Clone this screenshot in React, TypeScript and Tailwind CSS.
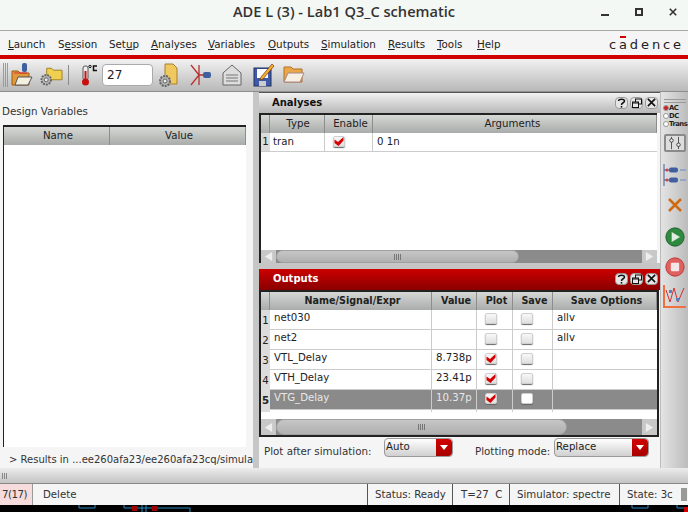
import React from 'react';

const FONT = 'font-["DejaVu_Sans",sans-serif]';
const HEADER_BG = 'bg-gradient-to-b from-[#d6d8d6] to-[#a9acaa]';

// menu label split around its underlined mnemonic
const MENUS: [string, string, string, string][] = [
  ['', 'L', 'aunch', 'w-[50px]'],
  ['S', 'e', 'ssion', 'w-[51px]'],
  ['Set', 'u', 'p', 'w-[42px]'],
  ['', 'A', 'nalyses', 'w-[57px]'],
  ['', 'V', 'ariables', 'w-[60px]'],
  ['', 'O', 'utputs', 'w-[53px]'],
  ['', 'S', 'imulation', 'w-[67px]'],
  ['', 'R', 'esults', 'w-[49px]'],
  ['', 'T', 'ools', 'w-[40px]'],
  ['', 'H', 'elp', 'w-[30px]'],
];

const OUTPUT_COLS = 'grid-cols-[9px_162px_45px_36px_40px_1fr]';
const ANALYSIS_COLS = 'grid-cols-[9px_55px_48px_1fr]';

const OUTPUT_ROWS = [
  { name: 'net030', value: '', plot: false, opts: 'allv' },
  { name: 'net2', value: '', plot: false, opts: 'allv' },
  { name: 'VTL_Delay', value: '8.738p', plot: true, opts: '' },
  { name: 'VTH_Delay', value: '23.41p', plot: true, opts: '' },
  { name: 'VTG_Delay', value: '10.37p', plot: true, opts: '', selected: true },
];

const Check = ({ on, bright }: { on?: boolean; bright?: boolean }) => (
  <span className={`relative block w-[12px] h-[11px] rounded-[2px] border border-[#cfcfcf] shadow-[0_1px_1px_#666] ${bright ? 'bg-white' : 'bg-gradient-to-b from-[#f8f8f8] to-[#e0e0e0]'}`}>
    {on && (
      <svg viewBox="0 0 12 11" className="absolute -left-[1px] -top-[1px] w-[12px] h-[11px]">
        <path d="M1.500 3.500 L5 6 L10.500 1 L10.500 4.500 L5.500 10 L1.500 7 Z" fill="#d80000" />
      </svg>
    )}
  </span>
);

const DockButtons = () => (
  <div className="flex items-center gap-[2px]">
    <span className="flex items-center justify-center w-[13px] h-[12px] rounded-[4px] bg-[#e6e6e6] border border-[#9a9a9a]">
      <svg viewBox="0 0 9 10" className="w-[9px] h-[10px]">
        <path d="M1.500 3 C1.500 0.500 7.500 0.500 7.500 3 C7.500 5 4.500 4.500 4.500 7" fill="none" stroke="#111" strokeWidth="1.500" />
        <rect x="3.700" y="8" width="1.600" height="1.600" fill="#111" />
      </svg>
    </span>
    <span className="flex items-center justify-center w-[13px] h-[12px] rounded-[4px] bg-[#e6e6e6] border border-[#9a9a9a]">
      <svg viewBox="0 0 10 10" className="w-[10px] h-[10px]">
        <rect x="3.500" y="1" width="6" height="5" fill="none" stroke="#111" />
        <rect x="0.500" y="4" width="6" height="5.500" fill="#e6e6e6" stroke="#111" />
        <path d="M1 5H6" stroke="#111" />
      </svg>
    </span>
    <span className="flex items-center justify-center w-[13px] h-[12px] rounded-[4px] bg-[#e6e6e6] border border-[#9a9a9a]">
      <svg viewBox="0 0 10 10" className="w-[9px] h-[9px]">
        <path d="M1 1 L9 9 M9 1 L1 9" stroke="#111" strokeWidth="1.800" />
      </svg>
    </span>
  </div>
);

const ScrollBar = ({ thumb, h }: { thumb: string; h: string }) => (
  <div className={`flex items-stretch bg-[#8b8b8b] shrink-0 ${h}`}>
    <div className="w-[15px] bg-[#c8c8c8] flex items-center justify-center">
      <svg viewBox="0 0 10 12" className="w-[9px] h-[11px]"><path d="M9 1 L1 6 L9 11 Z" fill="#eeeeee" /></svg>
    </div>
    <div className={`${thumb} rounded-full bg-gradient-to-b from-[#c6c6c6] to-[#b0b0b0] border border-[#a0a0a0] flex items-center justify-center`}>
      <span className="w-[8px] h-[6px] bg-[repeating-linear-gradient(90deg,#777_0_1px,transparent_1px_2px)]" />
    </div>
    <div className="flex-1" />
    <div className="w-[15px] bg-[#c8c8c8] flex items-center justify-center">
      <svg viewBox="0 0 10 12" className="w-[9px] h-[11px]"><path d="M1 1 L9 6 L1 11 Z" fill="#eeeeee" /></svg>
    </div>
  </div>
);

const Combo = ({ label, w }: { label: string; w: string }) => (
  <div className={`relative shrink-0 ${w} h-[19px] rounded-[4px] border border-[#9a9a9a] bg-gradient-to-b from-white to-[#d0d0d0] text-[10.200px] leading-[15px] pl-[1px] text-[#222]`}>
    {label}
    <span className="absolute right-0 top-0 bottom-0 w-[16px] rounded-r-[4px] bg-gradient-to-b from-[#d20000] to-[#a80000] flex items-center justify-center">
      <svg viewBox="0 0 8 5" className="w-[8px] h-[5px]"><path d="M0 0 H8 L4 5 Z" fill="#fff" /></svg>
    </span>
  </div>
);

const HeaderCell = ({ children, bold, pad = 'pl-[3px]' }: { children?: React.ReactNode; bold?: boolean; pad?: string }) => (
  <div className={`${HEADER_BG} border-r border-[#8d8d8d] text-center leading-[18px] text-[#222] ${bold ? 'font-bold text-[9.600px] pl-[4px]' : `text-[10.200px] ${pad}`}`}>{children}</div>
);

const Gear = ({ cx, cy }: { cx: number; cy: number }) => (
  <g>
    <circle cx={cx} cy={cy} r="5" fill="#b4b4b4" stroke="#666" strokeWidth="2" strokeDasharray="2 1" />
    <circle cx={cx} cy={cy} r="2" fill="#eee" stroke="#666" />
  </g>
);

const ToolIcons = () => (
  <div className="flex items-center">
    {/* grip */}
    <span className="ml-[3px] w-[6px] h-[24px] bg-[repeating-linear-gradient(90deg,#9a9a9a_0_1px,transparent_1px_2px)]" />
    {/* open session */}
    <svg viewBox="0 0 22 26" className="ml-[2px] w-[22px] h-[26px]">
      <path d="M1 9h6l2 2h9v12H1z" fill="#e09a3c" stroke="#a05a10" />
      <path d="M4 23l3-8h14l-4 8z" fill="#f4f0e0" stroke="#555" />
      <rect x="11" y="1" width="5" height="9" rx="2" fill="#3f5f9f" />
      <path d="M3 11h13" stroke="#d33" />
    </svg>
    {/* gear + folder */}
    <svg viewBox="0 0 24 24" className="ml-[7px] w-[23px] h-[24px]">
      <path d="M7 5h5l2 2h9v10H7z" fill="#f0cf50" stroke="#a08020" />
      <Gear cx={6.500} cy={17} />
    </svg>
    <span className="ml-[5px] w-px h-[20px] bg-[#8a8a8a]" />
    {/* thermometer */}
    <svg viewBox="0 0 18 24" className="ml-[11px] w-[18px] h-[24px]">
      <rect x="3" y="3" width="5" height="14" rx="2" fill="#eee" stroke="#555" />
      <rect x="4.500" y="8" width="2" height="10" fill="#c81010" />
      <circle cx="5.500" cy="19" r="3.500" fill="#c81010" />
      <circle cx="10" cy="3.500" r="1.200" fill="none" stroke="#111" />
      <path d="M17 3H13.500V7.500H17" fill="none" stroke="#111" strokeWidth="1.500" />
    </svg>
    <div className="ml-[4px] w-[51px] h-[22px] rounded-[4px] bg-white border border-[#aaa] pl-[4px] text-[12px] leading-[20px] text-[#222]">27</div>
    {/* gear + doc */}
    <svg viewBox="0 0 20 26" className="ml-[6px] w-[20px] h-[26px]">
      <path d="M6 2h8l4 4v16H6z" fill="#efc860" stroke="#a88030" />
      <Gear cx={6} cy={19} />
    </svg>
    {/* probe */}
    <svg viewBox="0 0 22 24" className="ml-[11px] w-[22px] h-[24px]">
      <path d="M1 2 L9 12 L1 22 M9 2 V22 M9 12 H14" fill="none" stroke="#b83030" strokeWidth="1.300" />
      <rect x="13" y="9" width="8" height="6" rx="2" fill="#3f5f9f" />
    </svg>
    {/* note */}
    <svg viewBox="0 0 20 24" className="ml-[10px] w-[20px] h-[24px]">
      <path d="M1 10 L10 2 L19 10 V22 H1 Z" fill="#ddd" stroke="#666" />
      <path d="M4 12h12M4 15h12M4 18h12" stroke="#777" />
    </svg>
    {/* save */}
    <svg viewBox="0 0 22 24" className="ml-[11px] w-[22px] h-[24px]">
      <rect x="1" y="5" width="17" height="18" fill="#3f5aa8" stroke="#203060" />
      <rect x="4" y="6" width="11" height="9" fill="#fff" />
      <rect x="6" y="18" width="7" height="5" fill="#ccc" />
      <path d="M8 14 L19 1 L21 3 L10 16 L7 17 Z" fill="#f0b030" stroke="#803010" strokeWidth="0.700" />
    </svg>
    {/* open */}
    <svg viewBox="0 0 22 24" className="ml-[8px] w-[22px] h-[24px]">
      <path d="M1 4h7l2 2h9v13H1z" fill="#e8a848" stroke="#b87020" />
      <path d="M1 19l4-9h16l-4 9z" fill="#f5f0e2" stroke="#a88" />
    </svg>
  </div>
);

const Radio = ({ on, label }: { on?: boolean; label: string }) => (
  <div className="flex items-center h-[8px]">
    <span className={`w-[6px] h-[6px] shrink-0 rounded-full border border-[#999] ${on ? 'bg-[#d02020]' : 'bg-white'}`} />
    <span className="tracking-[-0.500px]">{label}</span>
  </div>
);

const SideIcons = () => (
  <div className="flex flex-col items-center">
    <span className="mt-[7px] w-[22px] h-[4px] border-y border-[#999]" />
    <div className="mt-[1px] self-start pl-[2px] text-[6.800px] leading-[8px] font-semibold text-[#222]">
      <Radio on label="AC" />
      <Radio label="DC" />
      <Radio label="Trans" />
    </div>
    <div className="mt-[6px] w-[22px] h-[18px] border-2 border-[#8a8a8a] rounded-[2px] bg-[#ddd] flex items-center justify-center">
      <svg viewBox="0 0 16 16" className="w-[14px] h-[14px]">
        <path d="M4 1v14M12 1v14" stroke="#444" />
        <circle cx="4" cy="5" r="2" fill="#eee" stroke="#333" />
        <circle cx="12" cy="10" r="2" fill="#eee" stroke="#333" />
      </svg>
    </div>
    <svg viewBox="0 0 24 22" className="mt-[12px] w-[24px] h-[22px]">
      <path d="M1 0V22M1 6h5M1 16h5" stroke="#3f5f9f" />
      <rect x="6" y="3.500" width="9" height="5" rx="2" fill="#3f5f9f" />
      <rect x="6" y="13.500" width="9" height="5" rx="2" fill="#3f5f9f" />
      <path d="M17 6h6M17 16h6" stroke="#5f8fcf" />
      <circle cx="4" cy="6" r="1.500" fill="#d04040" />
      <circle cx="4" cy="16" r="1.500" fill="#d04040" />
    </svg>
    <svg viewBox="0 0 14 14" className="mt-[12px] w-[14px] h-[14px]">
      <path d="M1 1 L13 13 M13 1 L1 13" stroke="#d06a10" strokeWidth="2.500" />
    </svg>
    <svg viewBox="0 0 24 24" className="mt-[15px] w-[20px] h-[20px]">
      <circle cx="12" cy="12" r="11" fill="#2f8a3f" stroke="#1a5a28" />
      <path d="M8 6 L18 12 L8 18 Z" fill="#dfeee0" />
    </svg>
    <svg viewBox="0 0 24 24" className="mt-[10px] w-[20px] h-[20px]">
      <circle cx="12" cy="12" r="11" fill="#e06060" stroke="#b03030" />
      <rect x="7" y="7" width="10" height="10" rx="1" fill="#f4e6e6" />
    </svg>
    <svg viewBox="0 0 24 24" className="mt-[7px] w-[24px] h-[24px]">
      <path d="M1 1V23H23" fill="none" stroke="#f07040" strokeWidth="2" />
      <path d="M3 6 L7 18 L11 4 L15 18 L21 4" fill="none" stroke="#d03030" />
      <rect x="6" y="6" width="3" height="3" fill="#5f7fbf" />
      <rect x="13" y="14" width="3" height="3" fill="#5f7fbf" />
    </svg>
  </div>
);

const App: React.FC = () => {
  return (
    <div className={`w-[688px] h-[512px] overflow-hidden flex flex-col bg-[#d9d9d9] text-[#222] ${FONT}`}>
      {/* Title bar */}
      <header className="h-[31px] shrink-0 flex items-center justify-center pb-[7px] relative bg-[#f4f8f5] border-b border-[#a8a8a4]">
        <span className='font-["Open_Sans",sans-serif] font-semibold text-[14.600px] text-[#333]'>ADE L (3) - Lab1 Q3_C schematic</span>
        <div className="absolute right-[11px] top-[8px] flex items-start gap-[26px]">
          <span className="mt-[6px] w-[8px] h-[2px] bg-[#333]" />
          <span className="w-[8px] h-[8px] border-2 border-[#333]" />
          <svg viewBox="0 0 10 10" className="w-[8px] h-[8px]"><path d="M1 1 L9 9 M9 1 L1 9" stroke="#333" strokeWidth="2" /></svg>
        </div>
      </header>

      {/* Menu bar */}
      <nav className="h-[24px] shrink-0 flex items-center justify-between bg-[#f5f5f5] pl-[8px] pr-[4px] pt-[3px] text-[10.300px] text-[#222]">
        <div className="flex items-center">
          {MENUS.map(([a, u, b, w]) => (
            <span key={a + u + b} className={w}>{a}<span className="underline">{u}</span>{b}</span>
          ))}
        </div>
        <span className="text-[13px] tracking-[2.900px] text-[#222]">c<span className="relative">a<span className="absolute left-[1px] -top-[1px] w-[6px] h-[2px] bg-[#d00000]" /></span>dence</span>
      </nav>
      <div className="h-[4px] shrink-0 bg-[#d00000]" />

      {/* Toolbar */}
      <div className="h-[33px] shrink-0 flex items-center bg-gradient-to-b from-[#f2f2f2] to-[#b9b9b9] border-b border-[#8e8e8e]">
        <ToolIcons />
      </div>

      {/* Main */}
      <div className="flex-1 min-h-0 flex">
        {/* Design variables */}
        <section className="w-[253px] shrink-0 flex flex-col bg-[#f5f5f5] overflow-hidden">
          <div className="h-[33px] shrink-0 flex items-end pl-[2px] pb-[6px] text-[10.300px] text-[#333]">Design Variables</div>
          <div className="ml-[3px] mr-[7px] h-[322px] shrink-0 border-l border-t-2 border-[#222] bg-white">
            <div className="grid grid-cols-[106px_1fr] h-[18px]">
              <HeaderCell>Name</HeaderCell>
              <HeaderCell>Value</HeaderCell>
            </div>
          </div>
          <div className="h-[19px] mt-[2px] pl-[9px] text-[10px] leading-[21px] whitespace-nowrap text-[#333]">&gt; Results in ...ee260afa23/ee260afa23cq/simula</div>
        </section>
        <div className="w-[6px] shrink-0 bg-[#c6c6c6]" />

        {/* Docks */}
        <section className="w-[401px] shrink-0 flex flex-col bg-[#f5f5f5]">
          <div className="h-[21px] shrink-0 flex items-center justify-between pl-[13px] pr-[2px] pb-[1px] bg-gradient-to-b from-[#f2f2f2] to-[#b8b8b8] border-t border-[#555] text-[10px] font-bold text-[#111]">
            Analyses
            <DockButtons />
          </div>
          <div className="h-[150px] shrink-0 flex flex-col border-l-2 border-t-2 border-[#222] bg-white mr-[3px]">
            <div className={`grid ${ANALYSIS_COLS} h-[18px] shrink-0`}>
              <HeaderCell pad="" />
              <HeaderCell pad="pl-[2px]">Type</HeaderCell>
              <HeaderCell pad="pl-[4px]">Enable</HeaderCell>
              <HeaderCell pad="pr-[4px]">Arguments</HeaderCell>
            </div>
            <div className={`grid ${ANALYSIS_COLS} h-[19px] shrink-0 border-b border-[#ccc] text-[10.200px] leading-[18px]`}>
              <div className="bg-[#dcdcdc] text-center">1</div>
              <div className="pl-[3px] border-r border-[#ccc]">tran</div>
              <div className="flex items-start pl-[8px] pt-[3px] border-r border-[#ccc]"><Check on /></div>
              <div className="pl-[4px]">0 1n</div>
            </div>
            <div className="flex-1" />
            <ScrollBar thumb="w-[243px]" h="h-[13px]" />
          </div>
          <div className="h-[6px] shrink-0 bg-[#c6c6c6]" />

          <div className="h-[21px] shrink-0 flex items-center justify-between pl-[14px] pr-[2px] pb-[2px] bg-gradient-to-b from-[#cc0000] to-[#8a0000] text-[10px] font-bold text-white">
            Outputs
            <DockButtons />
          </div>
          <div className="h-[147px] shrink-0 flex flex-col border-x-2 border-y-2 border-[#222] bg-white mr-[1px]">
            <div className={`grid ${OUTPUT_COLS} h-[18px] shrink-0`}>
              <HeaderCell pad="" />
              <HeaderCell bold>Name/Signal/Expr</HeaderCell>
              <HeaderCell bold>Value</HeaderCell>
              <HeaderCell bold>Plot</HeaderCell>
              <HeaderCell bold>Save</HeaderCell>
              <HeaderCell bold>Save Options</HeaderCell>
            </div>
            {OUTPUT_ROWS.map((r, i) => (
              <div key={r.name} className={`grid ${OUTPUT_COLS} h-[20px] shrink-0 border-b border-[#ccc] text-[10.200px] leading-[15px] ${r.selected ? 'bg-[#8a8a8a] text-[#e8e8e8]' : ''}`}>
                <div className={`bg-[#dcdcdc] text-center text-[#222] leading-[22px] ${r.selected ? 'font-bold' : ''}`}>{i + 1}</div>
                <div className="pl-[4px] border-r border-[#ccc]">{r.name}</div>
                <div className="pl-[4px] border-r border-[#ccc]">{r.value}</div>
                <div className="flex items-start pl-[8px] pt-[3px] border-r border-[#ccc]"><Check on={r.plot} /></div>
                <div className="flex items-start pl-[8px] pt-[3px] border-r border-[#ccc]"><Check bright={r.selected} /></div>
                <div className="pl-[4px]">{r.opts}</div>
              </div>
            ))}
            <div className="flex-1" />
            <ScrollBar thumb="w-[291px]" h="h-[16px]" />
          </div>
          <div className="flex-1 flex items-start pl-[5px] pt-[1px] text-[10.300px] text-[#333] whitespace-nowrap">
            <span className="w-[120px] shrink-0 mt-[6px]">Plot after simulation:</span>
            <Combo label="Auto" w="w-[69px]" />
            <span className="ml-[22px] w-[79px] shrink-0 mt-[6px]">Plotting mode:</span>
            <Combo label="Replace" w="w-[95px]" />
          </div>
        </section>

        {/* Right toolbar */}
        <aside className="w-[28px] shrink-0 bg-gradient-to-r from-[#e4e4e4] to-[#bcbcbc] border-l border-[#bbb]">
          <SideIcons />
        </aside>
      </div>

      {/* Bottom grip bar */}
      <div className="h-[16px] shrink-0 flex items-center bg-gradient-to-b from-[#ececec] to-[#c4c4c4] border-b border-[#888]">
        <span className="ml-[2px] w-[6px] h-[6px] bg-[repeating-linear-gradient(90deg,#888_0_1px,transparent_1px_2px)]" />
      </div>

      {/* Status bar */}
      <footer className="h-[21px] shrink-0 flex items-stretch bg-[#f5f5f5] text-[10.200px] leading-[21px] text-[#333] whitespace-nowrap">
        <div className="w-[33px] shrink-0 bg-[#f6dcdc] border-r border-[#999] pl-[2px] tracking-[-0.500px]">7(17)</div>
        <div className="w-[334px] shrink-0 pl-[10px]">Delete</div>
        <div className="w-[85px] shrink-0 border-l border-[#555] pl-[7px]">Status: Ready</div>
        <div className="w-[57px] shrink-0 border-l border-[#555] pl-[8px]">T=27&nbsp;&nbsp;C</div>
        <div className="w-[110px] shrink-0 border-l border-[#555] pl-[7px]">Simulator: spectre</div>
        <div className="flex-1 border-l border-[#555] pl-[7px] flex justify-between">
          State: 3c
          <span className="w-[6px] my-[4px] bg-[#999] mr-[1px]" />
        </div>
      </footer>

      {/* Desktop behind the window */}
      <div className="h-[7px] shrink-0 bg-black flex items-start overflow-hidden">
        <svg viewBox="0 0 688 7" className="w-[688px] h-[7px]">
          <path d="M79 0V3H95V0M124 0V3H190V7M142 0V7M146 0V7" fill="none" stroke="#2a8ac0" />
          <rect x="132" y="1" width="5" height="5" fill="#a00000" />
          <rect x="152" y="1" width="5" height="5" fill="#a00000" />
          <path d="M632 0V3H648V0M677 0V3H688" fill="none" stroke="#2a8ac0" />
          <rect x="684" y="2" width="4" height="5" fill="#d00000" />
        </svg>
      </div>
    </div>
  );
};

export default App;
